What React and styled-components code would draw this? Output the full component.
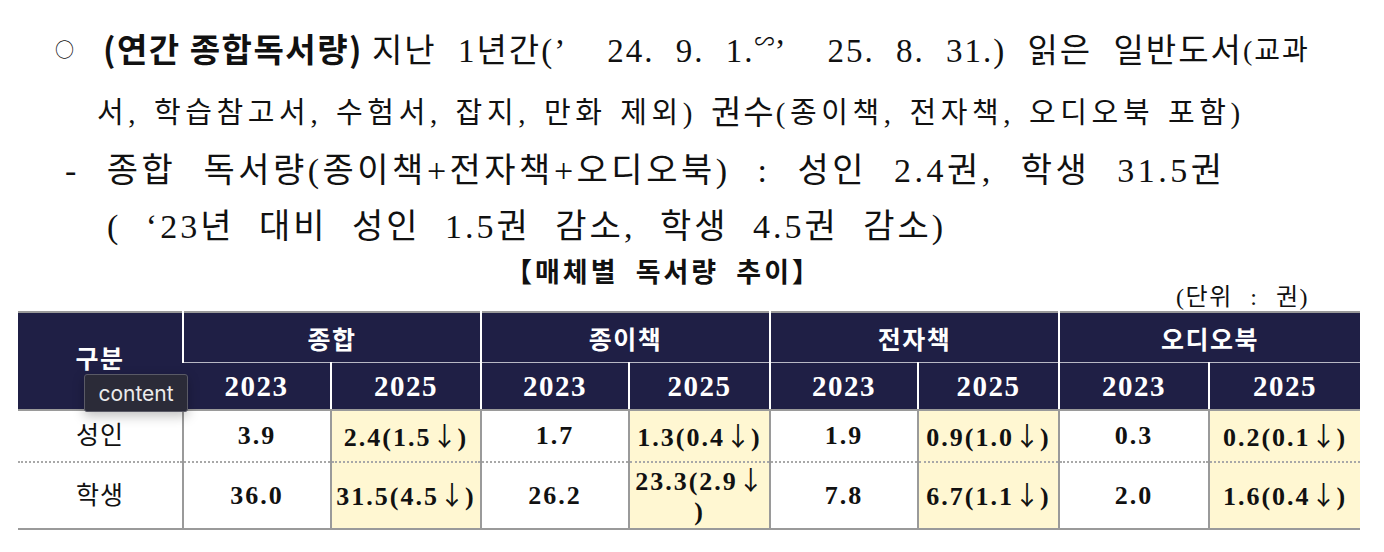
import React from 'react';
import styled, { createGlobalStyle } from 'styled-components';

const SERIF = `"Liberation Serif", "Noto Sans CJK KR", serif`;
const KR = `"Noto Sans CJK KR", sans-serif`;

const GlobalStyle = createGlobalStyle`
  html, body {
    margin: 0;
    padding: 0;
    background: #ffffff;
  }
  body {
    font-family: ${SERIF};
    color: #111111;
  }
`;

const Page = styled.div`
  width: 1384px;
  height: 552px;
  position: relative;
  overflow: hidden;
  padding-top: 18px;
  box-sizing: border-box;
`;

const Line = styled.div`
  display: flex;
  align-items: center;
  height: ${(p) => p.$h}px;
  padding-left: ${(p) => p.$indent}px;
  font-size: ${(p) => p.$size || 30}px;
  letter-spacing: ${(p) => p.$ls || 0}px;
  word-spacing: ${(p) => p.$ws || 0}px;
  white-space: pre;
`;

const Bullet = styled.span`
  display: inline-block;
  width: 48px;
  font-family: ${KR};
  font-size: 19px;
  letter-spacing: 0;
`;

const Bold = styled.span`
  font-family: ${KR};
  font-weight: 700;
  letter-spacing: 1.5px;
  word-spacing: 0;
`;

const Sized = styled.span`
  font-size: ${(p) => p.$size}px;
  letter-spacing: ${(p) => p.$ls}px;
  word-spacing: 0;
`;

const Tilde = styled.span`
  font-size: 20px;
  letter-spacing: 0;
  position: relative;
  top: -8px;
`;

const Title = styled.div`
  height: 34px;
  line-height: 34px;
  padding-left: 505px;
  font-family: ${KR};
  font-weight: 700;
  font-size: 27px;
  letter-spacing: 3px;
  word-spacing: 8px;
`;

const Unit = styled.div`
  height: 18px;
  line-height: 18px;
  text-align: right;
  padding-right: 75px;
  font-size: 24px;
  letter-spacing: 1.5px;
  word-spacing: 10px;
  margin-bottom: 5px;
`;

const TableWrap = styled.div`
  position: relative;
  padding-left: 18px;
`;

const Table = styled.table`
  border-collapse: collapse;
  table-layout: fixed;
  width: 1342px;
  border-top: 2px solid #9a9a9a;
  border-bottom: 2px solid #9a9a9a;
`;

const Th = styled.th`
  background: #1f1f45;
  color: #ffffff;
  font-family: ${SERIF};
  font-weight: 700;
  font-size: ${(p) => (p.$year ? 29 : 25)}px;
  letter-spacing: 1.5px;
  height: ${(p) => p.$h}px;
  padding: ${(p) => (p.$corner ? '0 0 8px' : '0')};
  border-left: 2px solid #ffffff;
  border-bottom: ${(p) => (p.$top ? '1px solid #b8b8c4' : '2px solid #9a9a9a')};
  text-align: center;
  &:first-child {
    border-left: none;
  }
`;

const Td = styled.td`
  background: ${(p) => (p.$hl ? '#fff7d2' : '#ffffff')};
  font-family: ${SERIF};
  font-weight: ${(p) => (p.$label ? 400 : 700)};
  font-size: ${(p) => (p.$label ? 25 : 26)}px;
  letter-spacing: ${(p) => (p.$label ? 1 : 2)}px;
  line-height: 30px;
  height: ${(p) => p.$h}px;
  padding: 0;
  text-align: center;
  border-left: 2px solid #9a9a9a;
  border-bottom: ${(p) => (p.$last ? 'none' : '2px dotted #a8a8a8')};
  color: #111111;
  &:first-child {
    border-left: none;
  }
`;

const Arrow = styled.span`
  font-family: ${KR};
  font-weight: 400;
  letter-spacing: 0;
`;

const Tooltip = styled.div`
  position: absolute;
  left: 84px;
  top: 63px;
  width: 104px;
  height: 38px;
  box-sizing: border-box;
  background: #2b2b38;
  border: 1px solid #5a5a66;
  border-radius: 3px;
  box-shadow: 0 4px 12px rgba(0, 0, 0, 0.25);
  color: #ececec;
  font-family: Inter, "Liberation Sans", sans-serif;
  font-size: 21px;
  display: flex;
  align-items: center;
  justify-content: center;
`;

const widths = [165, 148, 150, 148, 141, 148, 141, 150, 151];
const media = ['종합', '종이책', '전자책', '오디오북'];

const rows = [
  {
    label: '성인',
    h: 50,
    cells: ['3.9', '2.4(1.5↓)', '1.7', '1.3(0.4↓)', '1.9', '0.9(1.0↓)', '0.3', '0.2(0.1↓)'],
  },
  {
    label: '학생',
    h: 65,
    cells: ['36.0', '31.5(4.5↓)', '26.2', '23.3(2.9↓\n)', '7.8', '6.7(1.1↓)', '2.0', '1.6(0.4↓)'],
  },
];

// splits a value so the down arrow uses the full-width CJK glyph, and honours a forced line break
function Value({ text }) {
  return text.split('\n').map((line, li) => (
    <React.Fragment key={li}>
      {li > 0 && <br />}
      {line.split('↓').map((part, pi) => (
        <React.Fragment key={pi}>
          {pi > 0 && <Arrow>↓</Arrow>}
          {part}
        </React.Fragment>
      ))}
    </React.Fragment>
  ));
}

export default function App() {
  return (
    <Page>
      <GlobalStyle />
      <Line $h={60} $indent={55} $size={33} $ls={2} $ws={11}>
        <Bullet>○</Bullet>
        <Bold>(연간 종합독서량) </Bold>
        {'지난 1년간(’  24. 9. 1.'}
        <Tilde>∽</Tilde>
        {'’  25. 8. 31.) 읽은 일반도서'}
        <Sized $size={28} $ls={2}>(교과</Sized>
      </Line>
      <Line $h={64} $indent={97} $size={29} $ls={4.6} $ws={2}>
        {'서, 학습참고서, 수험서, 잡지, 만화 제외) '}
        <Sized $size={33} $ls={2}>권수</Sized>
        {'(종이책, 전자책, 오디오북 포함)'}
      </Line>
      <Line $h={50} $indent={65} $size={34} $ls={3.5} $ws={15}>
        {'- 종합 독서량(종이책+전자책+오디오북) : 성인 2.4권, 학생 31.5권'}
      </Line>
      <Line $h={62} $indent={107} $size={34} $ls={3} $ws={13}>
        {'( ‘23년 대비 성인 1.5권 감소, 학생 4.5권 감소)'}
      </Line>
      <Title>【매체별 독서량 추이】</Title>
      <Unit>(단위 : 권)</Unit>
      <TableWrap>
        <Table>
          <colgroup>
            {widths.map((w, i) => (
              <col key={i} style={{ width: w }} />
            ))}
          </colgroup>
          <thead>
            <tr>
              <Th rowSpan={2} $h={50} $corner>구분</Th>
              {media.map((m) => (
                <Th key={m} colSpan={2} $h={49} $top>
                  {m}
                </Th>
              ))}
            </tr>
            <tr>
              {media.map((m) => (
                <React.Fragment key={m}>
                  <Th $year $h={46}>2023</Th>
                  <Th $year $h={46}>2025</Th>
                </React.Fragment>
              ))}
            </tr>
          </thead>
          <tbody>
            {rows.map((r, ri) => (
              <tr key={r.label}>
                <Td $label $h={r.h} $last={ri === rows.length - 1}>
                  {r.label}
                </Td>
                {r.cells.map((c, ci) => (
                  <Td key={ci} $hl={ci % 2 === 1} $h={r.h} $last={ri === rows.length - 1}>
                    <Value text={c} />
                  </Td>
                ))}
              </tr>
            ))}
          </tbody>
        </Table>
        <Tooltip>content</Tooltip>
      </TableWrap>
    </Page>
  );
}
